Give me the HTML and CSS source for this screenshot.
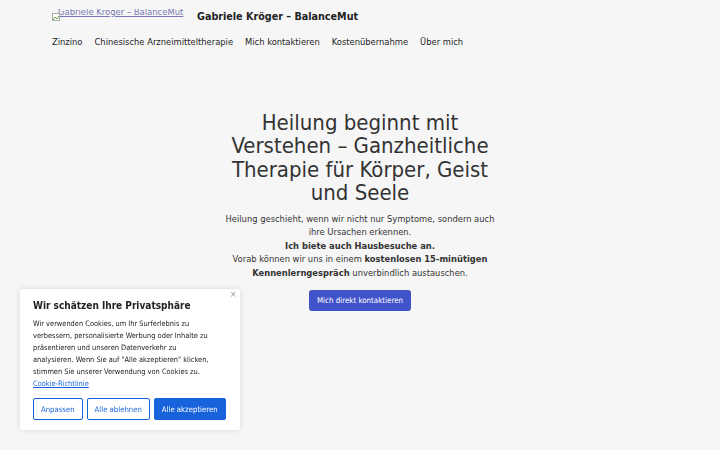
FILE: index.html
```html
<!DOCTYPE html>
<html lang="de">
<head>
    <meta charset="UTF-8">
    <meta name="viewport" content="width=device-width, initial-scale=1.0">
    <title>Gabriele Kröger – BalanceMut</title>
    <link rel="stylesheet" href="styles.css">
</head>
<body>

    <header class="site-header">
        <div class="brand">
            <a class="logo" href="#">
                <svg class="broken" width="8" height="8" viewBox="0 0 8 8"><rect x="0.5" y="0.5" width="7" height="7" fill="#fff" stroke="#aaa"/><path d="M1 7 L3 4 L5 6 L7 3" fill="none" stroke="#6a9f4f"/></svg>
                <span class="logo-alt">Gabriele Kröger – BalanceMut</span>
            </a>
            <a class="site-title" href="#">Gabriele Kröger – BalanceMut</a>
        </div>
        <nav class="main-nav">
            <a href="#">Zinzino</a>
            <a href="#">Chinesische Arzneimitteltherapie</a>
            <a href="#">Mich kontaktieren</a>
            <a href="#">Kostenübernahme</a>
            <a href="#">Über mich</a>
        </nav>
    </header>

    <main class="hero">
        <h1>Heilung beginnt mit Verstehen – Ganzheitliche Therapie für Körper, Geist und Seele</h1>
        <p>Heilung geschieht, wenn wir nicht nur Symptome, sondern auch ihre Ursachen erkennen.<br>
        <strong>Ich biete auch Hausbesuche an.</strong><br>
        Vorab können wir uns in einem <strong>kostenlosen 15-minütigen Kennenlerngespräch</strong> unverbindlich austauschen.</p>
        <a class="cta" href="#">Mich direkt kontaktieren</a>
    </main>

    <!-- Cookie-Hinweis -->
    <div class="cookie-box">
        <button class="cookie-close" aria-label="Schließen">×</button>
        <h2>Wir schätzen Ihre Privatsphäre</h2>
        <p>Wir verwenden Cookies, um Ihr Surferlebnis zu verbessern, personalisierte Werbung oder Inhalte zu präsentieren und unseren Datenverkehr zu analysieren. Wenn Sie auf "Alle akzeptieren" klicken, stimmen Sie unserer Verwendung von Cookies zu. <a href="#">Cookie-Richtlinie</a></p>
        <div class="cookie-actions">
            <button class="btn-outline">Anpassen</button>
            <button class="btn-outline">Alle ablehnen</button>
            <button class="btn-accept">Alle akzeptieren</button>
        </div>
    </div>

</body>
</html>
```

FILE: styles.css
```css
body {
    margin: 0;
    background-color: #f6f6f6;
    color: #222;
    font-family: "DejaVu Sans Condensed", "DejaVu Sans", sans-serif;
}
a {
    color: inherit;
    text-decoration: none;
}
.site-header {
    padding: 9px 52px 0;
}
.brand {
    display: flex;
    align-items: flex-start;
    gap: 12px;
    height: 20px;
}
.logo {
    position: relative;
    display: block;
    width: 133px;
    height: 12px;
    overflow: hidden;
}
.logo .broken {
    position: absolute;
    left: 0;
    top: 4px;
}
.logo-alt {
    display: block;
    margin-top: -3px;
    padding-left: 6px;
    font-size: 9.4px;
    color: #7779b3;
    text-decoration: underline;
    white-space: nowrap;
}
.site-title {
    font-size: 10.7px;
    font-weight: bold;
    color: #222;
    line-height: 16px;
}
.main-nav {
    display: flex;
    gap: 12px;
    margin-top: 5px;
    font-size: 9.3px;
    line-height: 16px;
}
.main-nav a {
    color: #222;
}
.hero {
    width: 276px;
    margin: 61px auto 0;
    text-align: center;
}
.hero h1 {
    margin: 0;
    font-size: 22px;
    font-weight: normal;
    line-height: 23.4px;
    color: #333;
}
.hero p {
    margin: 7px 0 0;
    font-size: 9.3px;
    line-height: 13.5px;
    color: #333;
}
.cta {
    display: inline-block;
    margin-top: 11px;
    padding: 0 8px;
    height: 21px;
    line-height: 21px;
    font-size: 7.9px;
    color: #fff;
    background-color: #4153c9;
    border-radius: 3px;
}
.cookie-box {
    position: fixed;
    left: 20px;
    top: 289px;
    width: 220px;
    height: 141px;
    box-sizing: border-box;
    padding: 10px 21px 10px 13px;
    background-color: #fff;
    box-shadow: 0 0 6px rgba(0, 0, 0, 0.12);
    border-radius: 3px;
}
.cookie-close {
    position: absolute;
    right: 4px;
    top: 0;
    border: none;
    background: none;
    color: #999;
    font-size: 10px;
    padding: 0;
    cursor: pointer;
}
.cookie-box h2 {
    margin: 0;
    font-size: 10px;
    font-weight: bold;
    color: #212121;
    line-height: 14px;
}
.cookie-box p {
    margin: 5px 0 0;
    font-size: 7.4px;
    line-height: 12px;
    color: #212121;
}
.cookie-box p a {
    color: #1863dc;
    text-decoration: underline;
}
.cookie-actions {
    display: flex;
    gap: 4px;
    margin-top: 8px;
}
.cookie-actions button {
    height: 22px;
    padding: 0 7px;
    font-family: "DejaVu Sans Condensed", "DejaVu Sans", sans-serif;
    font-size: 7.7px;
    white-space: nowrap;
    border-radius: 2px;
    cursor: pointer;
}
.btn-outline {
    background-color: #fff;
    color: #1863dc;
    border: 1.5px solid #1863dc;
}
.btn-accept {
    background-color: #1863dc;
    color: #fff;
    border: 1.5px solid #1863dc;
}
```
